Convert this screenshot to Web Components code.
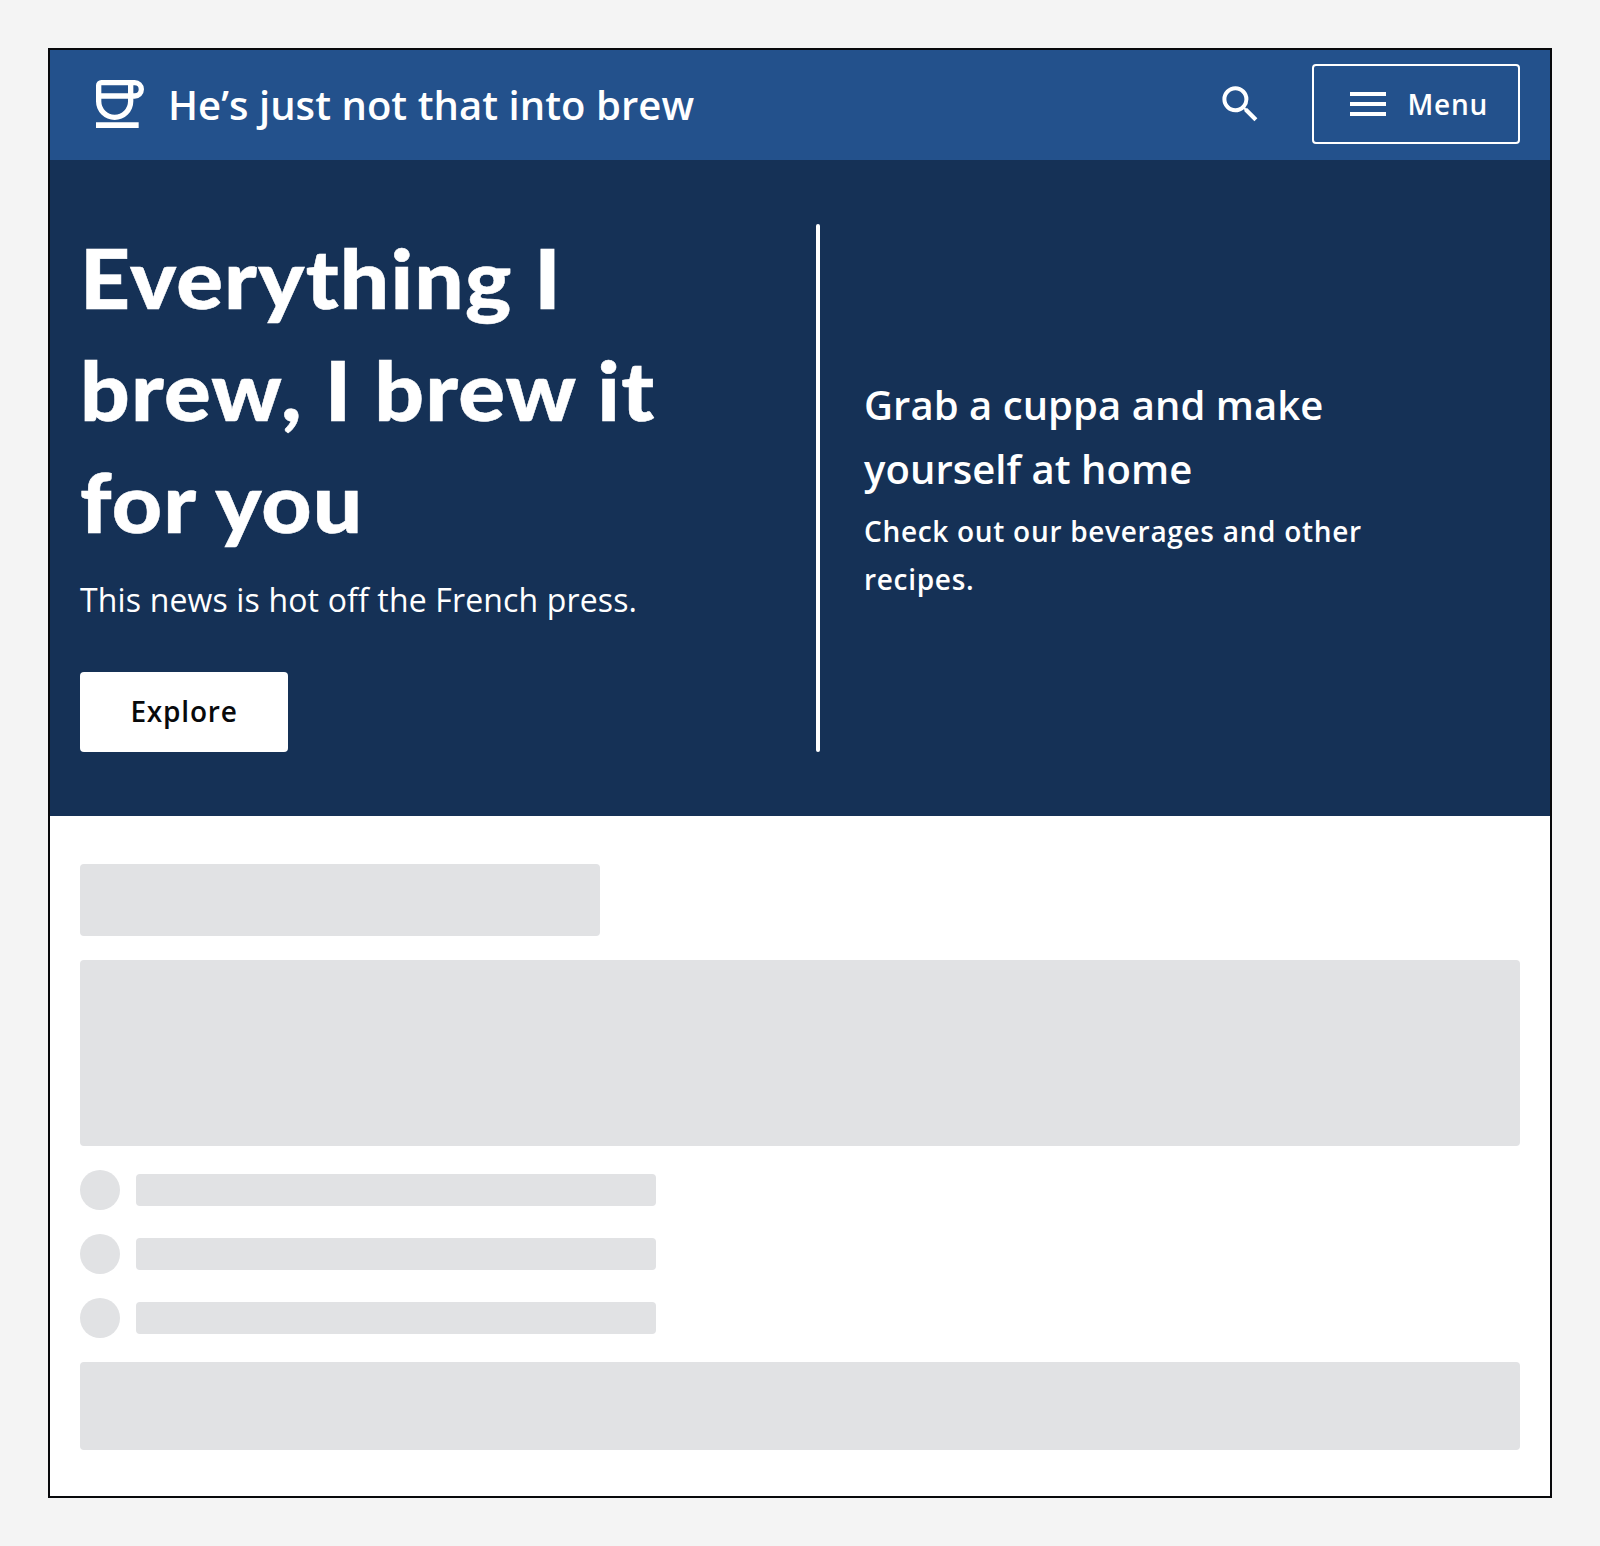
<!DOCTYPE html>
<html lang="en">
<head>
<meta charset="utf-8">
<title>He’s just not that into brew</title>
<style>
body{margin:0;background:#f4f4f4;font-family:"Open Sans","Noto Sans",sans-serif;color:#fff}
</style>
</head>
<body>
<brew-page>
  <site-header>
    <span slot="title">He’s just not that into brew</span>
    <menu-button slot="actions">Menu</menu-button>
  </site-header>
  <hero-banner>
    <span slot="heading">Everything I<br>brew, I brew it<br>for you</span>
    <span slot="lead">This news is hot off the French press.</span>
    <solid-button slot="action">Explore</solid-button>
    <span slot="aside-title">Grab a cuppa and make<br>yourself at home</span>
    <span slot="aside-text">Check out our beverages and other<br>recipes.</span>
  </hero-banner>
  <content-skeleton></content-skeleton>
</brew-page>
<script>
const define = (name, html) => {
  const template = document.createElement('template');
  template.innerHTML = html;
  customElements.define(name, class extends HTMLElement {
    constructor() {
      super();
      this.attachShadow({mode: 'open'}).append(template.content.cloneNode(true));
    }
  });
};

define('brew-page', `<style>
:host{display:flex;flex-direction:column;box-sizing:border-box;margin:48px;height:1450px;border:2px solid #08090b;background:#fff}
</style><slot></slot>`);

define('cup-icon', `<style>:host{display:block;width:48px;height:48px}svg{display:block}</style>
<svg width="48" height="48" viewBox="0 0 18 18" fill="#fff" fill-rule="evenodd"><path d="M2 0H14.5A3.5 3.5 0 0 1 14.5 7H14V8A7 7 0 0 1 0 8V2A2 2 0 0 1 2 0ZM2 2V5H12V2ZM14 2V5H14.5A1.5 1.5 0 0 0 14.5 2ZM2 7V8A5 5 0 0 0 12 8V7Z"/><path d="M0 15.8H16V18H0Z"/></svg>`);

define('search-icon', `<style>:host{display:block;width:48px;height:48px}svg{display:block}</style>
<svg width="48" height="48" viewBox="0 0 24 24" fill="#fff"><path transform="translate(.2 .15)" d="M15.5 14h-.79l-.28-.27A6.471 6.471 0 0 0 16 9.5 6.5 6.5 0 1 0 9.5 16c1.61 0 3.09-.59 4.23-1.57l.27.28v.79l5 4.99L20.49 19l-4.99-5zm-6 0C7.01 14 5 11.99 5 9.5S7.01 5 9.5 5 14 7.01 14 9.5 11.99 14 9.5 14z"/></svg>`);

define('menu-button', `<style>
:host{display:flex;align-items:center;box-sizing:border-box;width:208px;height:80px;padding-left:30px;gap:15.5px;border:2px solid #fff;border-radius:4px;font-size:28px;font-weight:600;line-height:48px;letter-spacing:.8px}
svg{display:block;flex:none}
span{padding-bottom:1px}
</style><svg width="48" height="48" viewBox="0 0 24 24" fill="#fff"><path d="M3 18h18v-2H3v2zm0-5h18v-2H3v2zm0-7v2h18V6H3z"/></svg><span><slot></slot></span>`);

define('site-header', `<style>
:host{display:flex;align-items:center;justify-content:space-between;box-sizing:border-box;height:110px;padding:0 30px 0 46px;background:#23518c}
.brand{display:flex;align-items:center;gap:24px;font-size:40px;font-weight:600;line-height:64px;letter-spacing:.05px}
.actions{display:flex;align-items:center;gap:48px;padding-bottom:2px}
cup-icon{margin-bottom:2px}
</style>
<div class="brand"><cup-icon></cup-icon><slot name="title"></slot></div>
<div class="actions"><search-icon></search-icon><slot name="actions"></slot></div>`);

define('solid-button', `<style>
:host{display:flex;align-items:center;justify-content:center;box-sizing:border-box;width:208px;height:80px;padding-bottom:2px;border-radius:4px;background:#fff;color:#08090b;font-size:28px;font-weight:600;line-height:48px;letter-spacing:.8px}
</style><slot></slot>`);

define('hero-banner', `<style>
:host{display:flex;box-sizing:border-box;height:656px;padding:64px 30px;background:#153156}
.main{display:flex;flex-direction:column;align-items:flex-start;width:736px}
h1{margin:-2.5px 0 0;font:900 81.5px/112px Lato,"Open Sans",sans-serif;letter-spacing:1.1px;-webkit-text-stroke:.5px #fff;transform:scaleX(1.07);transform-origin:0 0}
p{margin:0}
.lead{margin:14.5px 0 44px;font-size:32px;line-height:56px;letter-spacing:.15px}
.rule{width:4px;border-radius:2px;background:#fff}
aside{display:flex;flex-direction:column;justify-content:center;gap:6px;padding-left:44px;font-weight:600}
.title{font-size:40px;line-height:64px;letter-spacing:.05px}
.text{font-size:28px;line-height:48px;letter-spacing:.7px}
</style>
<div class="main"><h1><slot name="heading"></slot></h1><p class="lead"><slot name="lead"></slot></p><slot name="action"></slot></div>
<div class="rule"></div>
<aside><p class="title"><slot name="aside-title"></slot></p><p class="text"><slot name="aside-text"></slot></p></aside>`);

define('content-skeleton', `<style>
:host{display:flex;flex-direction:column;gap:24px;padding:48px 30px 0}
.block,.bar{border-radius:4px;background:#e1e2e4}
.heading{width:520px;height:72px}
.large{height:186px}
.small{height:88px}
.row{display:flex;align-items:center;gap:16px}
.dot{width:40px;height:40px;border-radius:50%;background:#e1e2e4}
.bar{width:520px;height:32px}
</style>
<div class="block heading"></div>
<div class="block large"></div>
<div class="row"><div class="dot"></div><div class="bar"></div></div>
<div class="row"><div class="dot"></div><div class="bar"></div></div>
<div class="row"><div class="dot"></div><div class="bar"></div></div>
<div class="block small"></div>`);
</script>
</body>
</html>
